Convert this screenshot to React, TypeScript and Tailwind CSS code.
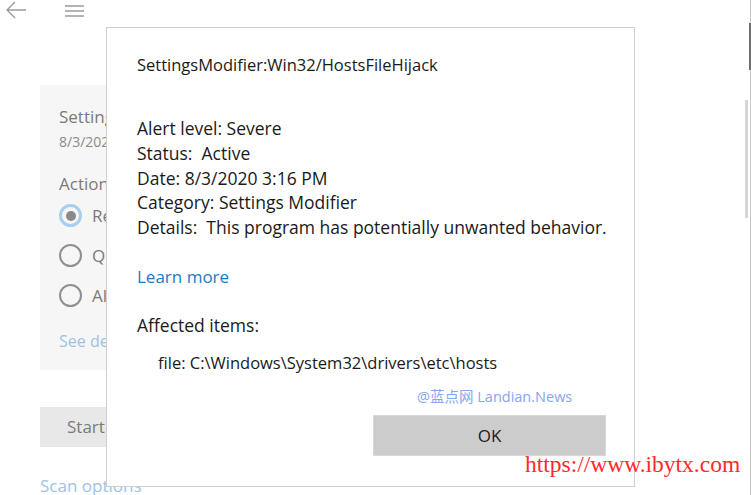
import React from "react";

const font = { fontFamily: '"Open Sans", "Noto Sans CJK SC", sans-serif' };

function Radio({ checked }: { checked?: boolean }) {
  return (
    <div
      className={
        "w-[23px] h-[23px] rounded-full flex items-center justify-center shrink-0 " +
        (checked ? "border-[3px] border-[#a9cdee]" : "border-[2px] border-[#8f8f8f]")
      }
    >
      {checked && <div className="w-[10px] h-[10px] rounded-full bg-[#8a8a8a]" />}
    </div>
  );
}

export default function App() {
  return (
    <div className="relative w-[751px] h-[495px] overflow-hidden bg-white" style={font}>
      {/* background page */}
      <div className="flex h-full">
        <div className="flex-1 flex flex-col">
          <div className="flex items-center h-[26px] shrink-0">
            <svg width="24" height="20" viewBox="0 0 24 20" className="ml-[4px] mt-[-6px]">
              <path d="M22 10H3M11 2L3 10l8 8" fill="none" stroke="#9a9a9a" strokeWidth="1.3" />
            </svg>
            <svg width="22" height="14" viewBox="0 0 22 14" className="ml-[36px] mt-[-4px]">
              <path d="M1 2h19M1 7h19M1 12h19" stroke="#9a9a9a" strokeWidth="1.3" />
            </svg>
          </div>
          <div className="shrink-0 ml-[40px] mt-[59px] w-[300px] h-[285px] bg-[#f6f6f6] pl-[19px] pt-[20px] text-[#7a7a7a]">
            <div className="text-[17px] leading-[24px]">SettingsModifier</div>
            <div className="mt-[3px] text-[14px] leading-[20px] text-[#8a8a8a]">8/3/2020</div>
            <div className="mt-[20px] text-[17px] leading-[24px]">Actions</div>
            <div className="mt-[8px] flex flex-col gap-[17px]">
              <div className="flex items-center gap-[10px] h-[23px]"><Radio checked /><span className="text-[17px]">Remove</span></div>
              <div className="flex items-center gap-[10px] h-[23px]"><Radio /><span className="text-[17px]">Quarantine</span></div>
              <div className="flex items-center gap-[10px] h-[23px]"><Radio /><span className="text-[17px]">Allow</span></div>
            </div>
            <div className="mt-[22px] text-[16px] text-[#9cc3e6]">See details</div>
          </div>
          <div className="shrink-0 ml-[40px] mt-[37px] w-[160px] h-[40px] bg-[#e8e8e8] flex items-center pl-[27px] text-[17px] text-[#7a7a7a] whitespace-nowrap">
            Start actions
          </div>
          <div className="shrink-0 ml-[40px] mt-[27px] text-[17px] leading-[23px] text-[#9cc3e6] whitespace-nowrap">Scan options</div>
        </div>
        <div className="relative w-[8px] h-full">
          <div className="absolute right-0 top-0 w-[1px] h-full bg-[#c8c8c8]" />
          <div className="absolute right-0 top-[23px] w-[2px] h-[47px] bg-[#6f6f6f]" />
          <div className="absolute right-[3px] top-[100px] w-[3px] h-[118px] bg-[#d6d6d6]" />
        </div>
      </div>

      {/* dialog */}
      <div className="absolute left-[106px] top-[27px] w-[529px] h-[460px] bg-white border border-[#cfcfcf] text-[#1a1a1a]">
        <div className="pl-[30px] pt-[26px]">
          <div className="text-[16.5px] leading-[22px]">SettingsModifier:Win32/HostsFileHijack</div>
          <div className="mt-[40px] text-[17.5px] leading-[24.8px]">
            <div>Alert level: Severe</div>
            <div>Status:&nbsp; Active</div>
            <div>Date: 8/3/2020 3:16 PM</div>
            <div>Category: Settings Modifier</div>
            <div>Details:&nbsp; This program has potentially unwanted behavior.</div>
          </div>
          <div className="mt-[25px] text-[17px] leading-[24px] text-[#1f78c1]">Learn more</div>
          <div className="mt-[24px] text-[17.5px] leading-[24px]">Affected items:</div>
          <div className="mt-[15px] ml-[21px] text-[16.5px] leading-[22px]">file: C:\Windows\System32\drivers\etc\hosts</div>
          <div className="mt-[14px] ml-[280px] text-[14.5px] leading-[18px] text-[#86a6f2]">@蓝点网 Landian.News</div>
          <div className="mt-[9px] ml-[236px] w-[233px] h-[41px] bg-[#cccccc] flex items-center justify-center text-[17px] border border-[#d8d8d8]">
            OK
          </div>
        </div>
      </div>

      {/* watermark */}
      <div
        className="absolute left-[525px] top-[449px] text-[23.5px] leading-[30px] text-[#ff2a2a]"
        style={{ fontFamily: '"Liberation Serif", serif' }}
      >
        https://www.ibytx.com
      </div>
    </div>
  );
}
